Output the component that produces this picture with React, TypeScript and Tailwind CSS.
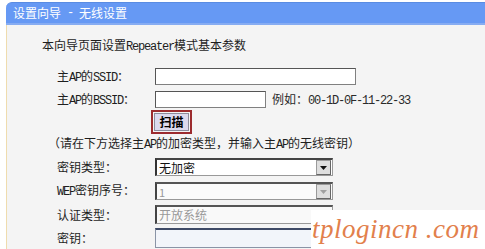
import type { ReactNode } from 'react';

const M = ({ children }: { children: ReactNode }): JSX.Element => (
  <span className="font-['Liberation_Mono',monospace] tracking-[-1.2px] whitespace-pre">{children}</span>
);

const Arrow = ({ disabled }: { disabled?: boolean }): JSX.Element => (
  <div className="flex h-[15px] w-[15px] items-center justify-center border border-[#9a9a9a] border-b-[#666] border-r-[#666] bg-[#dedede]">
    <svg width="7" height="4" viewBox="0 0 7 4">
      <polygon points="0,0 7,0 3.5,4" fill={disabled ? '#a0a0a0' : '#111'} />
    </svg>
  </div>
);

const Label = ({ children }: { children: ReactNode }): JSX.Element => (
  <div className="w-[98px] shrink-0 text-[#1e1e1e]">{children}</div>
);

export default function App(): JSX.Element {
  return (
    <div className="relative h-[249px] w-[485px] overflow-hidden bg-white pl-[6px] pt-[2px] font-['Noto_Sans_CJK_SC',sans-serif] text-[12px] leading-[16px]">
      <div className="flex h-[23px] items-center rounded-tl-[6px] border-t border-t-[#5a8ce2] border-b-2 border-b-[#86acf2] bg-[#6699f4] pl-[7px] text-white">
        设置向导<M> - </M>无线设置
      </div>
      <div className="flex h-[230px] flex-col border-l border-l-[#efdcae] bg-[#f4f4f4]">
        <div className="mt-[12px] h-[16px] pl-[35px] text-[#1e1e1e]">
          本向导页面设置<M>Repeater</M>模式基本参数
        </div>

        <div className="mt-[15px] flex h-[17px] items-center pl-[50px]">
          <Label>
            主<M>AP</M>的<M>SSID</M>：
          </Label>
          <div className="h-[17px] w-[201px] border border-[#808080] border-l-[#555] border-t-[#555] bg-white" />
        </div>

        <div className="mt-[6px] flex h-[17px] items-center pl-[50px]">
          <Label>
            主<M>AP</M>的<M>BSSID</M>：
          </Label>
          <div className="h-[17px] w-[111px] border border-[#808080] border-l-[#555] border-t-[#555] bg-white" />
          <div className="ml-[6px] text-[#2a2a2a]">
            例如：<M>00-1D-0F-11-22-33</M>
          </div>
        </div>

        <div className="mt-[2px] h-[24px] pl-[144px]">
          <div className="h-[24px] w-[41px] border-2 border-[#9c2b2e] p-px">
            <div className="flex h-full items-center justify-center border border-[#8c8c9c] bg-[#dcd9ee] font-bold text-black">
              扫描
            </div>
          </div>
        </div>

        <div className="mt-[1px] h-[16px] pl-[41px] text-[#1e1e1e]">
          （请在下方选择主<M>AP</M>的加密类型，并输入主<M>AP</M>的无线密钥）
        </div>

        <div className="mt-[7px] flex h-[18px] items-center pl-[50px]">
          <Label>密钥类型：</Label>
          <div className="flex h-[18px] w-[178px] items-center justify-between border border-[#999] border-l-2 border-l-[#333] border-t-2 border-t-[#444] bg-white pl-[2px] pr-px text-[#111]">
            <span>无加密</span>
            <Arrow />
          </div>
        </div>

        <div className="mt-[6px] flex h-[18px] items-center pl-[50px]">
          <Label>
            <M>WEP</M>密钥序号：
          </Label>
          <div className="flex h-[18px] w-[178px] items-center justify-between border border-[#999] border-l-2 border-l-[#444] border-t-2 border-t-[#555] bg-[#fbfbfb] pl-[2px] pr-px text-[#999]">
            <span className="text-[11px]">1</span>
            <Arrow disabled />
          </div>
        </div>

        <div className="mt-[5px] flex h-[19px] items-center pl-[50px]">
          <Label>认证类型：</Label>
          <div className="flex h-[19px] w-[178px] items-center border border-[#999] border-l-2 border-l-[#444] border-t-2 border-t-[#555] bg-[#f9f9f9] pl-[2px] text-[#999]">
            开放系统
          </div>
        </div>

        <div className="mt-[4px] flex h-[20px] items-center pl-[50px]">
          <Label>密钥：</Label>
          <div className="h-[20px] w-[178px] border border-[#8a94a6] border-t-2 border-t-[#3e4a66] bg-[#f2f5fa]" />
        </div>
      </div>

      <div className="absolute left-[311px] top-[210px] flex h-[39px] w-[174px] items-center bg-white pl-[1px]">
        <span className="font-['Liberation_Serif',serif] text-[27px] italic leading-none tracking-[0.5px] text-[#e2804c]">
          tplogincn .com
        </span>
      </div>
    </div>
  );
}
